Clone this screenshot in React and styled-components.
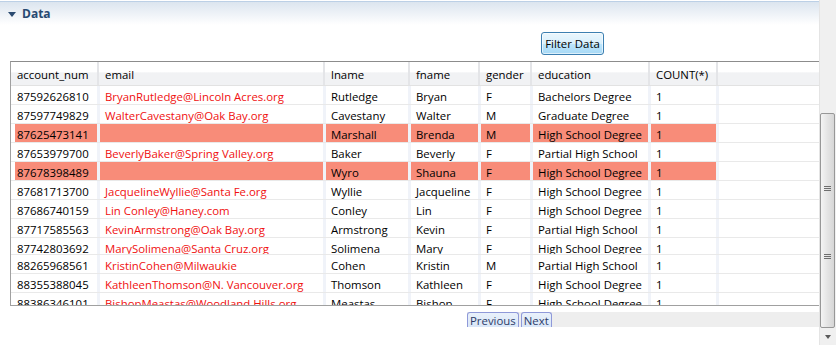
import React from "react";
import styled, { createGlobalStyle } from "styled-components";

const Global = createGlobalStyle`
  html, body { margin: 0; padding: 0; background: #fff; }
  body { font-family: "Open Sans", "Noto Sans", sans-serif; font-size: 11.4px; color: #000; }
  #root { width: 836px; height: 345px; overflow: hidden; }
`;

const Page = styled.div`
  display: flex;
  width: 836px;
  height: 345px;
  overflow: hidden;
`;

const Main = styled.div`
  flex: 1;
  display: flex;
  flex-direction: column;
  min-width: 0;
`;

const SectionHeader = styled.div`
  margin-top: 1px;
  height: 24px;
  box-sizing: border-box;
  border-top: 1px solid #bcd0e6;
  background: linear-gradient(#dce5ef, #ffffff);
  display: flex;
  align-items: center;
  padding-left: 8px;
  gap: 6px;
`;

const Triangle = styled.span`
  width: 0;
  height: 0;
  border-left: 4px solid transparent;
  border-right: 4px solid transparent;
  border-top: 5px solid #2b4a70;
  margin-top: 1px;
`;

const SectionTitle = styled.span`
  font-weight: 700;
  color: #284a72;
  font-size: 12px;
`;

const ButtonRow = styled.div`
  display: flex;
  padding: 7px 0 6px 541px;
`;

const FilterButton = styled.button`
  width: 63px;
  height: 23px;
  box-sizing: border-box;
  border: 1px solid #3c7fb1;
  border-radius: 3px;
  background: linear-gradient(#eaf6fd 0%, #d9f0fc 50%, #bee6fd 51%, #a7d9f5 100%);
  font-family: inherit;
  font-size: 11.4px;
  color: #000;
  padding: 0;
  box-shadow: inset 0 0 0 1px rgba(255,255,255,0.6);
`;

const Table = styled.div`
  margin-left: 10px;
  border-left: 1px solid #a0a0a0;
  border-top: 1px solid #8c8c8c;
  border-bottom: 1px solid #a0a0a0;
  display: flex;
  flex-direction: column;
`;

const HeaderRow = styled.div`
  display: flex;
  height: 24px;
  box-sizing: border-box;
  padding-left: 4px;
  border-bottom: 1px solid #e2e2e2;
  background: linear-gradient(#ffffff 0%, #ffffff 45%, #f1f2f4 46%, #f1f2f4 100%);
`;

const HeaderCell = styled.div`
  width: ${(p) => p.$w - 1}px;
  flex: none;
  box-sizing: border-box;
  padding-left: ${(p) => (p.$first ? 2 : 5)}px;
  border-right: 2px solid #e4e5e8;
  margin-right: 1px;
  line-height: 25px;
  white-space: nowrap;
  overflow: hidden;
`;

const Body = styled.div`
  height: 219px;
  overflow: hidden;
`;

const Row = styled.div`
  display: flex;
  height: ${(p) => (p.$clipped ? 17 : 19)}px;
  box-sizing: border-box;
  padding-left: 4px;
  border-bottom: 1px solid #e9e9e9;
  overflow: hidden;
`;

const Cell = styled.div`
  width: ${(p) => p.$w}px;
  flex: none;
  box-sizing: border-box;
  padding-left: ${(p) => (p.$first ? 2 : 5)}px;
  border-right: 3px solid #f0f3f9;
  background: ${(p) => (p.$hl ? "#f88c79" : "transparent")};
  color: ${(p) => (p.$red ? "#f01010" : "#000")};
  line-height: 21px;
  white-space: nowrap;
  overflow: hidden;
`;

const Pager = styled.div`
  display: flex;
  padding: 6px 0 0 467px;
`;

const PagerBar = styled.div`
  flex: 1;
  display: flex;
  gap: 2px;
  background: #eeeeee;
  height: 15px;
`;

const PageButton = styled.button`
  height: 15px;
  box-sizing: border-box;
  border: 1px solid #8f99d9;
  border-bottom: none;
  border-radius: 3px 3px 0 0;
  background: linear-gradient(#e9f1fb, #d9e6f7);
  color: #2c3b68;
  font-family: inherit;
  font-size: 11.4px;
  line-height: 13px;
  padding: 0 ${(p) => p.$px}px;
`;

const Scrollbar = styled.div`
  width: 17px;
  flex: none;
  box-sizing: border-box;
  border-left: 1px solid #e4e4e4;
  background: #f0f0f0;
  display: flex;
  flex-direction: column;
  padding-top: 113px;
`;

const Thumb = styled.div`
  width: 15px;
  height: 215px;
  box-sizing: border-box;
  border: 1px solid #979797;
  border-radius: 2px;
  background: linear-gradient(to right, #f4f4f4, #e4e4e4 50%, #d6d6d6);
  display: flex;
  flex-direction: column;
  align-items: center;
`;

const Grip = styled.div`
  margin-top: ${(p) => p.$top}px;
  width: 7px;
  height: 5px;
  background: repeating-linear-gradient(#6e6e6e 0 1px, transparent 1px 2px);
`;

const ArrowBox = styled.div`
  flex: 1;
  display: flex;
  align-items: center;
  justify-content: center;
`;

const DownArrow = styled.span`
  width: 0;
  height: 0;
  border-left: 3.5px solid transparent;
  border-right: 3.5px solid transparent;
  border-top: 4px solid #5a5a5a;
  margin-left: -1px;
`;

const columns = [
  { key: "account_num", w: 85 },
  { key: "email", w: 226 },
  { key: "lname", w: 85 },
  { key: "fname", w: 70 },
  { key: "gender", w: 52 },
  { key: "education", w: 118 },
  { key: "COUNT(*)", w: 68 },
];

const rows = [
  ["87592626810", "BryanRutledge@Lincoln Acres.org", "Rutledge", "Bryan", "F", "Bachelors Degree", "1"],
  ["87597749829", "WalterCavestany@Oak Bay.org", "Cavestany", "Walter", "M", "Graduate Degree", "1"],
  ["87625473141", "", "Marshall", "Brenda", "M", "High School Degree", "1", "hl"],
  ["87653979700", "BeverlyBaker@Spring Valley.org", "Baker", "Beverly", "F", "Partial High School", "1"],
  ["87678398489", "", "Wyro", "Shauna", "F", "High School Degree", "1", "hl"],
  ["87681713700", "JacquelineWyllie@Santa Fe.org", "Wyllie", "Jacqueline", "F", "High School Degree", "1"],
  ["87686740159", "Lin Conley@Haney.com", "Conley", "Lin", "F", "High School Degree", "1"],
  ["87717585563", "KevinArmstrong@Oak Bay.org", "Armstrong", "Kevin", "F", "Partial High School", "1"],
  ["87742803692", "MarySolimena@Santa Cruz.org", "Solimena", "Mary", "F", "High School Degree", "1", "clip"],
  ["88265968561", "KristinCohen@Milwaukie", "Cohen", "Kristin", "M", "Partial High School", "1"],
  ["88355388045", "KathleenThomson@N. Vancouver.org", "Thomson", "Kathleen", "F", "High School Degree", "1"],
  ["88386346101", "BishopMeastas@Woodland Hills.org", "Meastas", "Bishop", "F", "High School Degree", "1"],
];

export default function App() {
  return (
    <>
      <Global />
      <Page>
        <Main>
          <SectionHeader>
            <Triangle />
            <SectionTitle>Data</SectionTitle>
          </SectionHeader>
          <ButtonRow>
            <FilterButton>Filter Data</FilterButton>
          </ButtonRow>
          <Table>
            <HeaderRow>
              {columns.map((c, i) => (
                <HeaderCell key={c.key} $w={c.w} $first={i === 0}>
                  {c.key}
                </HeaderCell>
              ))}
            </HeaderRow>
            <Body>
              {rows.map((r) => {
                const hl = r[7] === "hl";
                const clip = r[7] === "clip";
                return (
                  <Row key={r[0]} $clipped={clip}>
                    {columns.map((c, i) => (
                      <Cell key={c.key} $w={c.w} $first={i === 0} $hl={hl} $red={i === 1}>
                        {r[i]}
                      </Cell>
                    ))}
                  </Row>
                );
              })}
            </Body>
          </Table>
          <Pager>
            <PagerBar>
              <PageButton $px={2}>Previous</PageButton>
              <PageButton $px={2}>Next</PageButton>
            </PagerBar>
          </Pager>
        </Main>
        <Scrollbar>
          <Thumb>
            <Grip $top={72} />
            <Grip $top={63} />
          </Thumb>
          <ArrowBox>
            <DownArrow />
          </ArrowBox>
        </Scrollbar>
      </Page>
    </>
  );
}
